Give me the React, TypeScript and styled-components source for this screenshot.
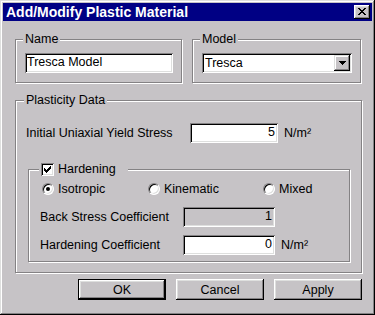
import React from 'react';
import styled, { createGlobalStyle } from 'styled-components';

const FACE = '#c6c3c6';
const SHADOW = '#848284';
const LIGHT = '#dedfde';

const GlobalStyle = createGlobalStyle`
  html, body {
    margin: 0;
    padding: 0;
    background: ${FACE};
  }
  body {
    font-family: "Liberation Sans", Arial, sans-serif;
    font-size: 12.5px;
    color: #000;
  }
  * {
    box-sizing: border-box;
  }
`;

const Window = styled.div`
  display: flex;
  width: 375px;
  height: 315px;
  flex-direction: column;
  padding: 3px;
  background: ${FACE};
  box-shadow: inset -1px -1px 0 #000, inset 1px 1px 0 ${LIGHT},
    inset -2px -2px 0 ${SHADOW}, inset 2px 2px 0 #fff;
`;

const TitleBar = styled.div`
  display: flex;
  height: 18px;
  align-items: center;
  justify-content: space-between;
  padding: 0 2px 0 3px;
  background: #000084;
  color: #fff;
  font-size: 14px;
  font-weight: bold;
  line-height: 18px;
`;

const CloseButton = styled.button`
  display: flex;
  width: 16px;
  height: 14px;
  align-items: center;
  justify-content: center;
  padding: 0 0 1px;
  border: 0;
  background: ${FACE};
  box-shadow: inset -1px -1px 0 #000, inset 1px 1px 0 #fff,
    inset -2px -2px 0 ${SHADOW}, inset 2px 2px 0 ${LIGHT};
`;

const Body = styled.div`
  display: flex;
  flex-direction: column;
  padding: 11px 10px 0 12px;
`;

const TopRow = styled.div`
  display: flex;
  gap: 10px;
`;

// etched group box; $m is its margin, $pad its padding
const Group = styled.fieldset<{ $w?: number; $pad: string; $m?: string }>`
  min-width: 0;
  width: ${(p) => (p.$w ? `${p.$w}px` : 'auto')};
  margin: ${(p) => p.$m ?? '0'};
  padding: ${(p) => p.$pad};
  border: 1px solid ${SHADOW};
  box-shadow: inset 1px 1px 0 #fff, 1px 1px 0 #fff;
`;

const Legend = styled.legend<{ $shift?: number; $right?: number }>`
  display: flex;
  align-items: center;
  gap: 4px;
  margin-left: ${(p) => p.$shift ?? -2}px;
  padding: 0 ${(p) => p.$right ?? 2}px 0 2px;
  background: ${FACE};
  line-height: 14px;
`;

const TextBox = styled.input<{ $w: number; $right?: boolean; $off?: boolean }>`
  display: block;
  width: ${(p) => p.$w}px;
  height: 20px;
  padding: 0 ${(p) => (p.$right ? 3 : 1)}px 2px 2px;
  border: 0;
  outline: none;
  background: ${(p) => (p.$off ? FACE : '#fff')};
  box-shadow: inset 1px 1px 0 ${SHADOW}, inset -1px -1px 0 #fff,
    inset 2px 2px 0 #000, inset -2px -2px 0 ${LIGHT};
  color: #000;
  font: inherit;
  line-height: 14px;
  text-align: ${(p) => (p.$right ? 'right' : 'left')};
`;

const Combo = styled.div`
  display: flex;
  width: 150px;
  height: 20px;
  align-items: center;
  justify-content: space-between;
  padding: 2px 2px 2px 3px;
  background: #fff;
  box-shadow: inset 1px 1px 0 ${SHADOW}, inset -1px -1px 0 #fff,
    inset 2px 2px 0 #000, inset -2px -2px 0 ${LIGHT};
  line-height: 14px;
`;

const ComboButton = styled.span`
  display: flex;
  width: 16px;
  height: 16px;
  align-items: center;
  justify-content: center;
  background: ${FACE};
  box-shadow: inset -1px -1px 0 #000, inset 1px 1px 0 ${LIGHT},
    inset -2px -2px 0 ${SHADOW}, inset 2px 2px 0 #fff;
`;

const FieldRow = styled.div<{ $label: number; $top: number }>`
  display: grid;
  grid-template-columns: ${(p) => p.$label}px auto auto;
  align-items: center;
  justify-content: start;
  margin-top: ${(p) => p.$top}px;
  line-height: 14px;
`;

const Unit = styled.span`
  margin-left: 6px;
`;

const RadioRow = styled.div`
  display: grid;
  grid-template-columns: 106px 115px auto;
  margin-top: 6px;
  padding-left: 2px;
  line-height: 14px;
`;

const Option = styled.label`
  display: flex;
  align-items: center;
  gap: 4px;
`;

const RadioDot = styled.span<{ $on?: boolean }>`
  position: relative;
  width: 12px;
  height: 12px;
  border: 1px solid;
  border-color: ${SHADOW} #fff #fff ${SHADOW};
  border-radius: 50%;
  background: #fff;
  box-shadow: inset 1px 1px 0 #000, inset -1px -1px 0 ${LIGHT};

  &::after {
    position: absolute;
    top: 3px;
    left: 3px;
    display: ${(p) => (p.$on ? 'block' : 'none')};
    width: 4px;
    height: 4px;
    border-radius: 50%;
    background: #000;
    content: '';
  }
`;

const CheckBox = styled.span`
  display: flex;
  width: 13px;
  height: 13px;
  align-items: center;
  justify-content: center;
  background: #fff;
  box-shadow: inset 1px 1px 0 ${SHADOW}, inset -1px -1px 0 #fff,
    inset 2px 2px 0 #000, inset -2px -2px 0 ${LIGHT};
`;

const ButtonRow = styled.div`
  display: flex;
  justify-content: flex-end;
  gap: 10px;
  margin-top: 6px;
`;

const PushButton = styled.button<{ $default?: boolean }>`
  width: 88px;
  height: 21px;
  padding: 0;
  border: ${(p) => (p.$default ? '1px solid #000' : '0')};
  background: ${FACE};
  box-shadow: inset -1px -1px 0 #000, inset 1px 1px 0 #fff,
    inset -2px -2px 0 ${SHADOW}, inset 2px 2px 0 ${LIGHT};
  color: #000;
  font: inherit;
  line-height: 14px;
`;

const CloseGlyph = () => (
  <svg width="8" height="7" viewBox="0 0 8 7" shapeRendering="crispEdges">
    <path
      d="M0 0h2v1H0zM6 0h2v1H6zM1 1h2v1H1zM5 1h2v1H5zM2 2h4v1H2zM3 3h2v1H3zM2 4h4v1H2zM1 5h2v1H1zM5 5h2v1H5zM0 6h2v1H0zM6 6h2v1H6z"
      fill="#000"
    />
  </svg>
);

const DownArrow = () => (
  <svg width="7" height="4" viewBox="0 0 7 4" shapeRendering="crispEdges">
    <path d="M0 0h7v1H0zM1 1h5v1H1zM2 2h3v1H2zM3 3h1v1H3z" fill="#000" />
  </svg>
);

const CheckMark = () => (
  <svg width="7" height="7" viewBox="0 0 7 7" shapeRendering="crispEdges">
    <path
      d="M6 0h1v1H6zM5 1h2v1H5zM0 2h1v1H0zM4 2h3v1H4zM0 3h2v1H0zM3 3h3v1H3zM0 4h5v1H0zM1 5h3v1H1zM2 6h1v1H2z"
      fill="#000"
    />
  </svg>
);

const App = () => (
  <>
    <GlobalStyle />
    <Window>
      <TitleBar>
        <span>Add/Modify Plastic Material</span>
        <CloseButton type="button">
          <CloseGlyph />
        </CloseButton>
      </TitleBar>
      <Body>
        <TopRow>
          <Group $w={167} $pad="7px 8px 9px 9px">
            <Legend>Name</Legend>
            <TextBox $w={148} defaultValue="Tresca Model" />
          </Group>
          <Group $w={169} $pad="7px 8px 9px 9px">
            <Legend>Model</Legend>
            <Combo>
              <span>Tresca</span>
              <ComboButton>
                <DownArrow />
              </ComboButton>
            </Combo>
          </Group>
        </TopRow>
        <Group $pad="0 10px 10px 10px" $m="10px 0 0">
          <Legend>Plasticity Data</Legend>
          <FieldRow $label={164} $top={16}>
            <span>Initial Uniaxial Yield Stress</span>
            <TextBox $w={88} $right defaultValue="5" />
            <Unit>N/m²</Unit>
          </FieldRow>
          <Group $pad="0 11px 6px 11px" $m="19px 1px 0 2px">
            <Legend $shift={-1} $right={12}>
              <CheckBox>
                <CheckMark />
              </CheckBox>
              Hardening
            </Legend>
            <RadioRow>
              <Option>
                <RadioDot $on />
                Isotropic
              </Option>
              <Option>
                <RadioDot />
                Kinematic
              </Option>
              <Option>
                <RadioDot />
                Mixed
              </Option>
            </RadioRow>
            <FieldRow $label={143} $top={11}>
              <span>Back Stress Coefficient</span>
              <TextBox $w={92} $right $off readOnly defaultValue="1" />
            </FieldRow>
            <FieldRow $label={143} $top={8}>
              <span>Hardening Coefficient</span>
              <TextBox $w={92} $right defaultValue="0" />
              <Unit>N/m²</Unit>
            </FieldRow>
          </Group>
        </Group>
        <ButtonRow>
          <PushButton type="button" $default>
            OK
          </PushButton>
          <PushButton type="button">Cancel</PushButton>
          <PushButton type="button">Apply</PushButton>
        </ButtonRow>
      </Body>
    </Window>
  </>
);

export default App;
